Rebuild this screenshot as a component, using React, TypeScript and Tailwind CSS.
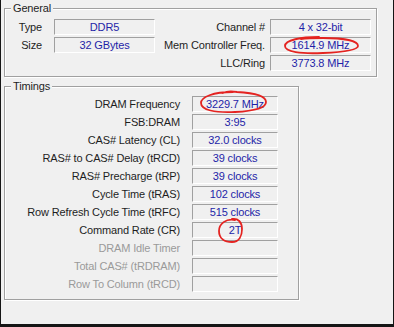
import React from 'react';

const FONT = { fontFamily: '"Liberation Sans", Arial, sans-serif' };

const Field: React.FC<{ value?: string; className?: string }> = ({ value, className = '' }) => (
  <div
    className={`h-[16px] border-t border-l border-[#a0a0a0] border-b-white border-r-white border-b border-r flex items-center justify-center text-[#1f1fa8] leading-none ${className}`}
  >
    {value}
  </div>
);

const GroupBox: React.FC<{ title: string; className?: string; children: React.ReactNode }> = ({
  title,
  className = '',
  children,
}) => (
  <div
    className={`relative border border-[#a0a0a0] shadow-[inset_1px_1px_0_#ffffff,1px_1px_0_#ffffff] ${className}`}
  >
    <span className="absolute left-[6px] top-[-8px] px-[2px] bg-[#f0f0f0] leading-[14px] text-[#1e1e1e]">
      {title}
    </span>
    {children}
  </div>
);

const timings: { label: string; value?: string; disabled?: boolean }[] = [
  { label: 'DRAM Frequency', value: '3229.7 MHz' },
  { label: 'FSB:DRAM', value: '3:95' },
  { label: 'CAS# Latency (CL)', value: '32.0 clocks' },
  { label: 'RAS# to CAS# Delay (tRCD)', value: '39 clocks' },
  { label: 'RAS# Precharge (tRP)', value: '39 clocks' },
  { label: 'Cycle Time (tRAS)', value: '102 clocks' },
  { label: 'Row Refresh Cycle Time (tRFC)', value: '515 clocks' },
  { label: 'Command Rate (CR)', value: '2T' },
  { label: 'DRAM Idle Timer', disabled: true },
  { label: 'Total CAS# (tRDRAM)', disabled: true },
  { label: 'Row To Column (tRCD)', disabled: true },
];

export default function App() {
  return (
    <div
      className="relative w-[394px] h-[327px] box-border bg-[#f0f0f0] border-l border-r border-b-[3px] border-[#151515] text-[11px] tracking-[-0.15px] text-[#1e1e1e] overflow-hidden"
      style={FONT}
    >
      {/* General */}
      <GroupBox title="General" className="ml-[3px] mt-[8px] w-[373px] h-[69px]">
        <div className="pt-[10px] flex flex-col gap-[2px]">
          <div className="flex items-center h-[16px]">
            <span className="w-[37px] text-right">Type</span>
            <Field value="DDR5" className="ml-[12px] w-[101px]" />
            <span className="w-[110px] text-right">Channel #</span>
            <Field value="4 x 32-bit" className="ml-[5px] w-[101px]" />
          </div>
          <div className="flex items-center h-[16px]">
            <span className="w-[37px] text-right">Size</span>
            <Field value="32 GBytes" className="ml-[12px] w-[101px]" />
            <span className="w-[110px] text-right whitespace-nowrap">Mem Controller Freq.</span>
            <Field value="1614.9 MHz" className="ml-[5px] w-[101px]" />
          </div>
          <div className="flex items-center h-[16px]">
            <span className="w-[260px] text-right">LLC/Ring</span>
            <Field value="3773.8 MHz" className="ml-[5px] w-[101px]" />
          </div>
        </div>
      </GroupBox>

      {/* Timings */}
      <GroupBox title="Timings" className="ml-[3px] mt-[9px] w-[295px] h-[214px]">
        <div className="pt-[9px] flex flex-col gap-[2px]">
          {timings.map((t) => (
            <div key={t.label} className="flex items-center h-[16px]">
              <span
                className={`w-[175px] text-right whitespace-nowrap ${t.disabled ? 'text-[#9a9a9a]' : ''}`}
              >
                {t.label}
              </span>
              <Field value={t.value} className="ml-[12px] w-[86px]" />
            </div>
          ))}
        </div>
      </GroupBox>

      {/* red hand-drawn markings */}
      <svg
        className="absolute left-0 top-0 pointer-events-none"
        width="394"
        height="327"
        viewBox="0 0 394 327"
        fill="none"
        stroke="#e42320"
        strokeWidth="1.8"
        strokeLinecap="round"
      >
        <path d="M318 37 C300 37 284 40 284 46 C284 52 300 54 322 53 C344 52 357 50 357 46 C357 41 343 38 322 38 C312 38 306 38 300 39" />
        <path d="M232 92 C212 92 200 97 200 103 C200 110 214 113 234 112 C254 111 265 108 265 102 C265 96 254 93 236 92 C230 91 226 91 222 93" />
        <path d="M234 220 C225 218 218 224 218 231 C218 239 224 242 231 242 C238 242 241 236 241 229 C241 222 237 218 231 219" />
      </svg>
    </div>
  );
}
